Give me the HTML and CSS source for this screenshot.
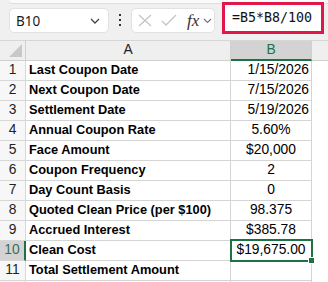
FILE: index.html
```html
<!DOCTYPE html>
<html lang="en">
<head>
  <meta charset="UTF-8" />
  <meta name="viewport" content="width=device-width, initial-scale=1.0"/>
  <title>Clean Cost</title>
  <link rel="stylesheet" href="styles.css">
</head>
<body>
  <div class="toolbar">
    <div class="namebox">
      <span>B10</span>
      <svg class="chev" width="10" height="6" viewBox="0 0 10 6"><polyline points="1,1 5,5 9,1" fill="none" stroke="#444" stroke-width="1.3"/></svg>
    </div>
    <div class="dots">
      <svg width="4" height="14" viewBox="0 0 4 14"><rect x="1" y="1" width="2" height="2" fill="#333"/><rect x="1" y="6" width="2" height="2" fill="#333"/><rect x="1" y="11" width="2" height="2" fill="#333"/></svg>
    </div>
    <div class="fbuttons">
      <svg width="14" height="13" viewBox="0 0 14 13"><path d="M1 1 L13 12 M13 1 L1 12" stroke="#c4c4c4" stroke-width="1.3" fill="none"/></svg>
      <svg width="16" height="13" viewBox="0 0 16 13"><polyline points="1,7 5,11 15,1" fill="none" stroke="#c4c4c4" stroke-width="1.3"/></svg>
      <span class="fx">fx</span>
      <svg width="9" height="6" viewBox="0 0 9 6"><polyline points="1,1 4.5,4.5 8,1" fill="none" stroke="#777" stroke-width="1.2"/></svg>
    </div>
    <div class="formula">=B5*B8/100</div>
  </div>

  <div class="sheet">
    <div class="corner"><svg width="13" height="13" viewBox="0 0 13 13"><polygon points="13,0 13,13 0,13" fill="#c8c8c8"/></svg></div>
    <div class="colhead">A</div>
    <div class="colhead active">B</div>
    <div class="colhead rest"></div>

    <div class="rowhead">1</div><div class="label">Last Coupon Date</div><div class="val right">1/15/2026</div><div class="blank"></div>
    <div class="rowhead">2</div><div class="label">Next Coupon Date</div><div class="val right">7/15/2026</div><div class="blank"></div>
    <div class="rowhead">3</div><div class="label">Settlement Date</div><div class="val right">5/19/2026</div><div class="blank"></div>
    <div class="rowhead">4</div><div class="label">Annual Coupon Rate</div><div class="val">5.60%</div><div class="blank"></div>
    <div class="rowhead">5</div><div class="label">Face Amount</div><div class="val">$20,000</div><div class="blank"></div>
    <div class="rowhead">6</div><div class="label">Coupon Frequency</div><div class="val">2</div><div class="blank"></div>
    <div class="rowhead">7</div><div class="label">Day Count Basis</div><div class="val">0</div><div class="blank"></div>
    <div class="rowhead">8</div><div class="label">Quoted Clean Price (per $100)</div><div class="val">98.375</div><div class="blank"></div>
    <div class="rowhead">9</div><div class="label">Accrued Interest</div><div class="val">$385.78</div><div class="blank"></div>
    <div class="rowhead active">10</div><div class="label">Clean Cost</div><div class="val selected">$19,675.00</div><div class="blank"></div>
    <div class="rowhead">11</div><div class="label">Total Settlement Amount</div><div class="val"></div><div class="blank"></div>
    <div class="rowhead"></div><div class="label"></div><div class="val"></div><div class="blank"></div>
  </div>
</body>
</html>
```

FILE: styles.css
```css
body {
  margin: 0;
  font-family: "Liberation Sans", Arial, sans-serif;
  background-color: #fff;
  color: #000;
  overflow: hidden;
}

/* formula bar */
.toolbar {
  position: relative;
  display: flex;
  align-items: flex-start;
  height: 40px;
  padding-left: 9px;
  background-color: #f0f0f0;
  border-bottom: 1px solid #d6d6d6;
}

.toolbar::before {
  content: "";
  position: absolute;
  top: 0;
  left: 9px;
  right: 0;
  height: 3px;
  background-color: #fafafa;
  border-bottom-left-radius: 4px;
  box-shadow: 0 1px 1px rgba(0, 0, 0, 0.08);
}

.namebox {
  display: flex;
  align-items: center;
  justify-content: space-between;
  box-sizing: border-box;
  width: 100px;
  height: 25px;
  margin-top: 8px;
  padding: 0 8px 0 6px;
  background-color: #fff;
  border: 1px solid #e2e2e2;
  border-radius: 5px;
  font-family: "Noto Sans", sans-serif;
  font-size: 13.5px;
  color: #1a1a1a;
}

.dots {
  display: flex;
  justify-content: center;
  width: 22px;
  margin-top: 13px;
}

.fbuttons {
  display: flex;
  align-items: center;
  gap: 9px;
  box-sizing: border-box;
  width: 84px;
  height: 25px;
  margin-top: 8px;
  padding-left: 6px;
  background-color: #fff;
  border: 1px solid #e2e2e2;
  border-radius: 5px;
}

.fx {
  font-family: "Liberation Serif", serif;
  font-style: italic;
  font-size: 17px;
  color: #333;
  margin-left: 1px;
  margin-right: -5px;
}

.formula {
  position: relative;
  z-index: 1;
  box-sizing: border-box;
  width: 102px;
  height: 32px;
  margin-top: 2px;
  margin-left: 7px;
  padding-left: 7px;
  background-color: #fff;
  border: 3px solid #e0184a;
  font-family: "DejaVu Sans Mono", monospace;
  font-size: 13.3px;
  line-height: 26px;
  color: #111;
}

/* grid */
.sheet {
  display: grid;
  grid-template-columns: 26px 205px 81px 1fr;
  grid-auto-rows: 20px;
}

.sheet > div {
  box-sizing: border-box;
  display: flex;
  align-items: flex-end;
  padding-bottom: 3px;
  border-right: 1px solid #d4d4d4;
  border-bottom: 1px solid #d4d4d4;
  font-size: 13.8px;
  line-height: 14px;
  white-space: nowrap;
  overflow: hidden;
}

.sheet > .corner {
  align-items: center;
  justify-content: flex-end;
  padding: 0 3px 0 0;
  background-color: #efefef;
  border-color: #d0d0d0;
}

.sheet > .colhead {
  justify-content: center;
  background-color: #efefef;
  border-color: #d0d0d0;
  color: #222;
}

.sheet > .colhead.active {
  background-color: #d3d3d3;
  border-bottom: 2px solid #1e7145;
  padding-bottom: 2px;
  color: #1e7145;
}

.sheet > .colhead.rest {
  border-right: none;
}

.sheet > .rowhead {
  justify-content: center;
  background-color: #f7f7f7;
  border-color: #d8d8d8;
  color: #222;
}

.sheet > .rowhead.active {
  background-color: #d3d3d3;
  border-right: 2px solid #1e7145;
  color: #3d6e55;
}

.sheet > .label {
  padding-left: 3px;
  font-weight: bold;
  font-size: 12.8px;
  overflow: visible;
  position: relative;
  z-index: 1;
}

.sheet > .val {
  justify-content: center;
  position: relative;
  background-color: #fff;
  z-index: 2;
}

.sheet > .val.right {
  justify-content: flex-end;
  padding-right: 2px;
}

.sheet > .val.selected {
  overflow: visible;
  z-index: 3;
}

.val.selected::after {
  content: "";
  position: absolute;
  top: -2px;
  left: -1px;
  right: -2px;
  bottom: -2px;
  border: 2px solid #1e7145;
}

.val.selected::before {
  content: "";
  position: absolute;
  right: -4px;
  bottom: -4px;
  width: 5px;
  height: 5px;
  background-color: #1e7145;
  border: 1px solid #fff;
  z-index: 1;
}

.sheet > .blank {
  border: none;
}
```
